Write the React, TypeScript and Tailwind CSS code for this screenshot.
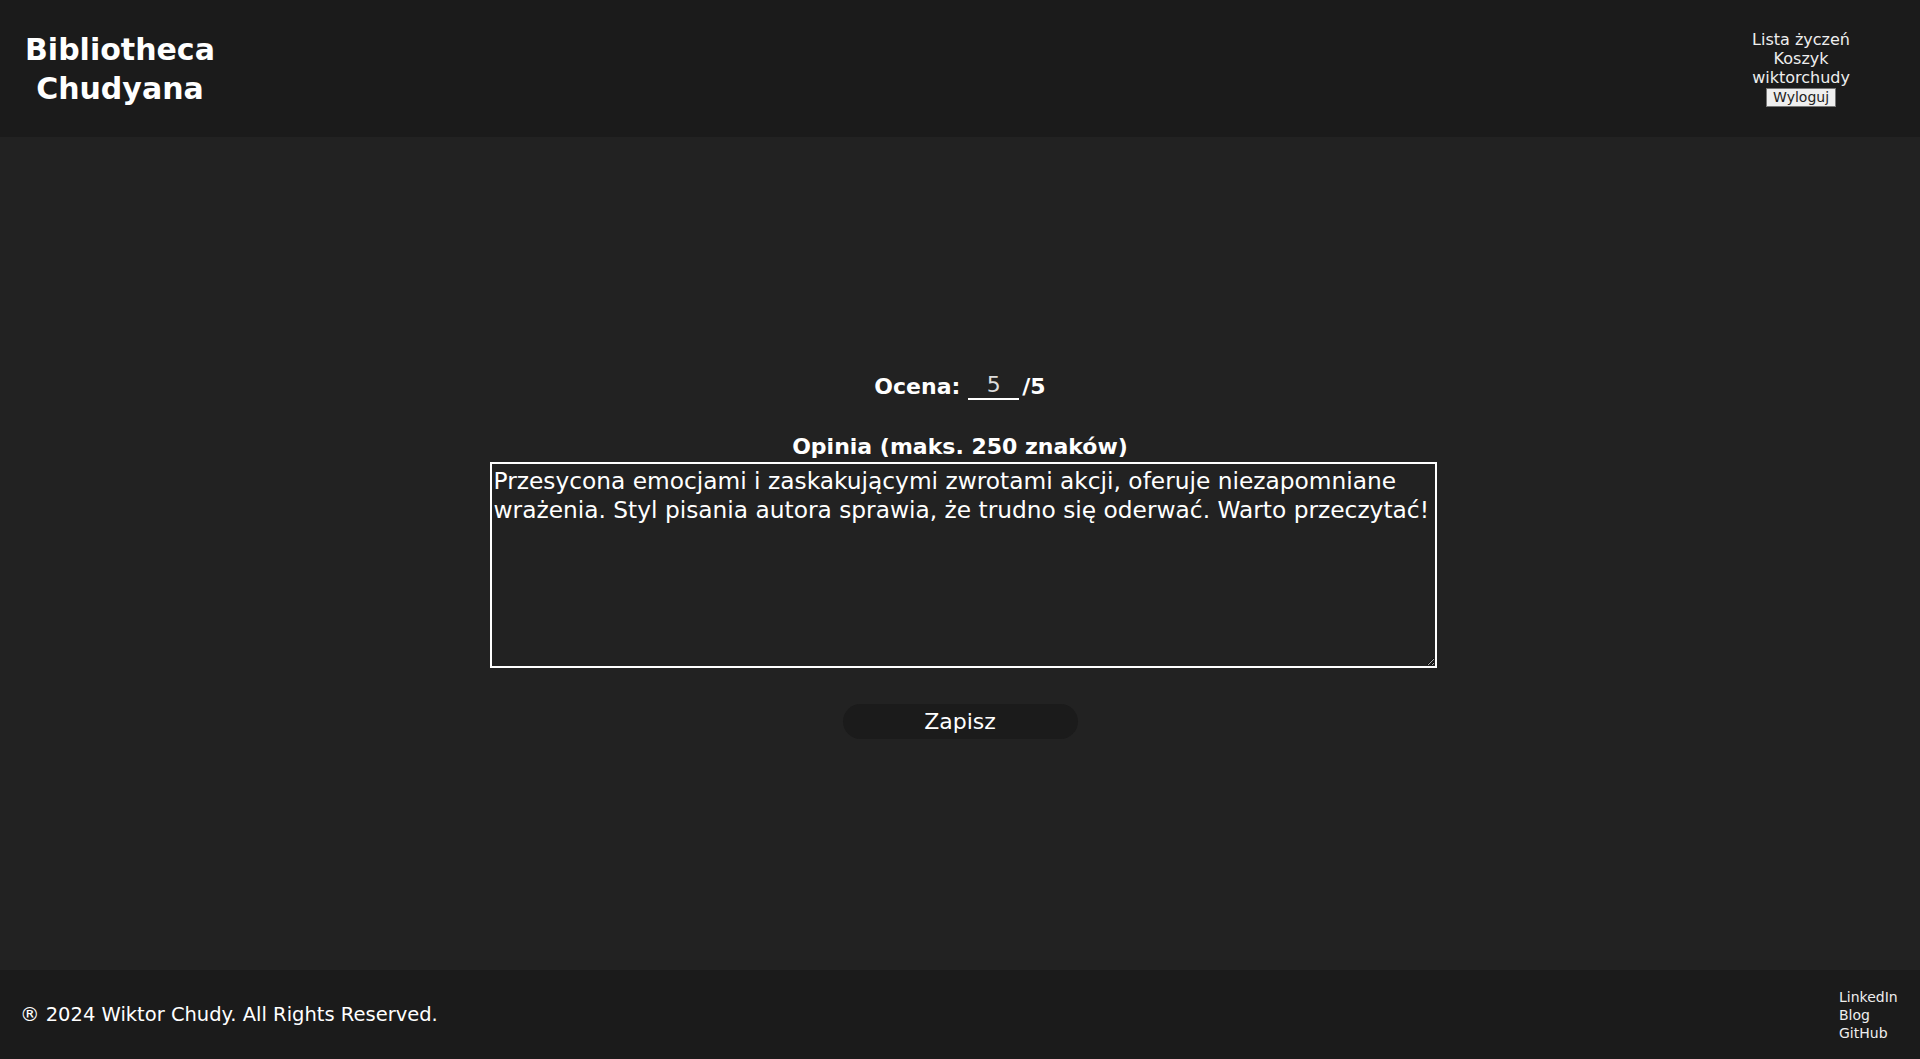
import { useState } from "react";

// Strona dodawania opinii o książce.

const font = "font-['DejaVu_Sans','Liberation_Sans',sans-serif]";

function Header() {
  return (
    <header className="flex h-[137px] items-center justify-between bg-[#1b1b1b] pl-[25px] pr-[70px]">
      <h1 className="text-center text-[30px] font-bold leading-[39px] text-white">
        Bibliotheca
        <br />
        Chudyana
      </h1>
      <nav className="flex flex-col items-center text-[16px] leading-[19px] text-[#eee]">
        <a href="#">Lista życzeń</a>
        <a href="#">Koszyk</a>
        <span>wiktorchudy</span>
        <button className="mt-[1px] border border-[#767676] bg-[#efefef] px-[6px] text-[14px] leading-[17px] text-[#222]">
          Wyloguj
        </button>
      </nav>
    </header>
  );
}

function Footer() {
  return (
    <footer className="flex h-[89px] items-center justify-between bg-[#1b1b1b] pl-[20px] pr-[21px]">
      <p className="text-[19.5px] text-white">® 2024 Wiktor Chudy. All Rights Reserved.</p>
      <div className="flex w-[60px] flex-col text-[14px] leading-[18px] text-[#eee]">
        <a href="#">LinkedIn</a>
        <a href="#">Blog</a>
        <a href="#">GitHub</a>
      </div>
    </footer>
  );
}

export default function App() {
  const [rating, setRating] = useState("5");
  const [text, setText] = useState(
    "Przesycona emocjami i zaskakującymi zwrotami akcji, oferuje niezapomniane wrażenia. Styl pisania autora sprawia, że trudno się oderwać. Warto przeczytać!"
  );

  return (
    <div className={`flex min-h-screen flex-col bg-[#222222] text-white ${font}`}>
      <Header />
      <main className="flex flex-1 flex-col items-center justify-center pt-[3px]">
        <div className="flex items-end text-[22px] font-bold leading-[27px]">
          <span>Ocena:</span>
          <input
            value={rating}
            onChange={(e) => setRating(e.target.value)}
            className="ml-[8px] mr-[3px] w-[51px] border-b-2 border-white bg-transparent text-center text-[22px] font-normal leading-[26px] text-[#ddd] outline-none"
          />
          <span>/5</span>
        </div>

        <label className="mt-[33px] text-[22px] font-bold leading-[27px]">Opinia (maks. 250 znaków)</label>
        <textarea
          value={text}
          onChange={(e) => setText(e.target.value)}
          className="ml-[6px] mt-[2px] h-[206px] w-[947px] border-2 border-white bg-transparent p-[2px] text-[23.3px] leading-[29px] text-white outline-none"
        />

        <button className="mt-[36px] h-[35px] w-[235px] rounded-full bg-[#1b1b1b] text-[22px] text-white">
          Zapisz
        </button>
      </main>
      <Footer />
    </div>
  );
}
